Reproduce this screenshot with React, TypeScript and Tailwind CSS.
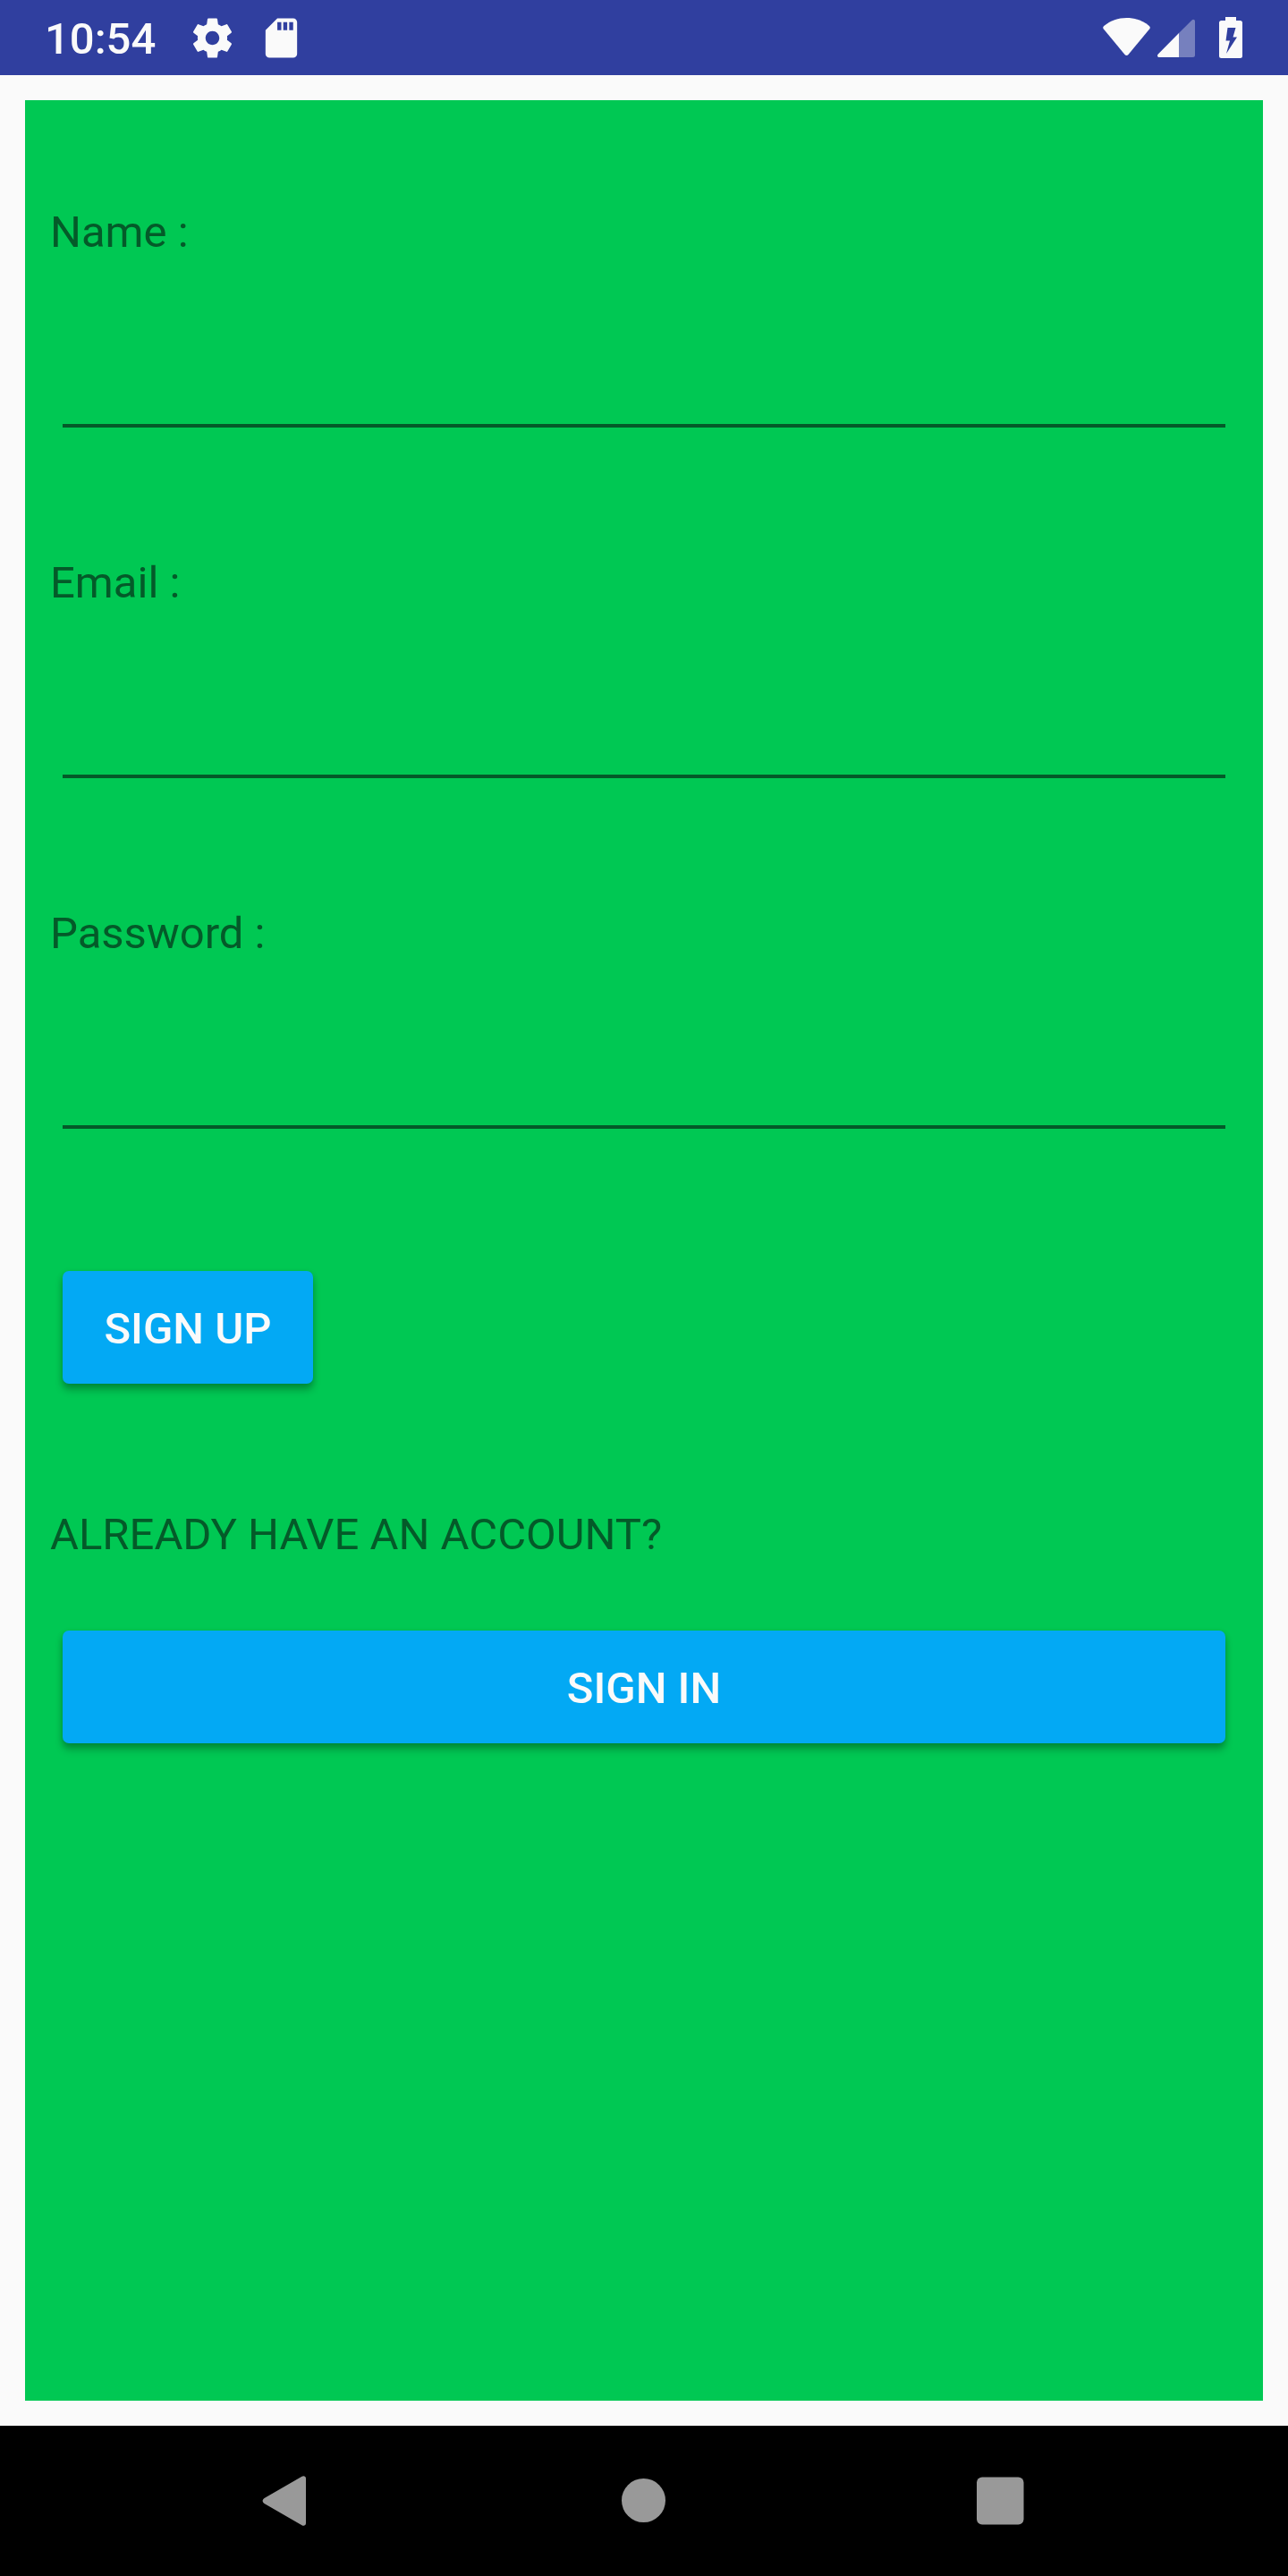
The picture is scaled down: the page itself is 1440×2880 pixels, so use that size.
import type { ReactNode } from "react";

function StatusBar() {
  return (
    <header className="flex h-[84px] items-center bg-[#303f9f] px-[50px] text-[#fafafa]">
      <time className="pt-[3px] text-[49px] leading-[58px] font-medium">10:54</time>
      <svg className="ml-[37px] size-[53px]" viewBox="0 0 24 24" fill="currentColor" aria-hidden="true">
        <path d="M19.43 12.98c.04-.32.07-.64.07-.98s-.03-.66-.07-.98l2.11-1.65c.19-.15.24-.42.12-.64l-2-3.46c-.12-.22-.39-.3-.61-.22l-2.49 1c-.52-.4-1.08-.73-1.69-.98l-.38-2.65C14.46 2.18 14.25 2 14 2h-4c-.25 0-.46.18-.49.42l-.38 2.65c-.61.25-1.17.59-1.69.98l-2.49-1c-.23-.09-.49 0-.61.22l-2 3.46c-.13.22-.07.49.12.64l2.11 1.65c-.04.32-.07.65-.07.98s.03.66.07.98l-2.11 1.65c-.19.15-.24.42-.12.64l2 3.46c.12.22.39.3.61.22l2.49-1c.52.4 1.08.73 1.69.98l.38 2.65c.03.24.24.42.49.42h4c.25 0 .46-.18.49-.42l.38-2.65c.61-.25 1.17-.59 1.69-.98l2.49 1c.23.09.49 0 .61-.22l2-3.46c.12-.22.07-.49-.12-.64l-2.11-1.65zM12 15.5c-1.93 0-3.500-1.570-3.500-3.500s1.570-3.500 3.500-3.500 3.500 1.570 3.500 3.500-1.570 3.500-3.500 3.500z" />
      </svg>
      <svg className="ml-[24px] size-[53px]" viewBox="0 0 24 24" fill="currentColor" aria-hidden="true">
        <path d="M18 2h-8L4.02 8 4 20c0 1.1.9 2 2 2h12c1.1 0 2-.9 2-2V4c0-1.1-.9-2-2-2zm-6 6h-2V4h2v4zm3 0h-2V4h2v4zm3 0h-2V4h2v4z" />
      </svg>
      <div className="ml-auto flex items-center">
        <svg className="h-[46px] w-[54px]" viewBox="0 0 54 46" fill="currentColor" aria-hidden="true">
          <path d="M1.200 10C8.500 4 17.300 1 26.500 1S44.500 4 51.800 10C53 11 53.100 12.200 52.300 13.200L28.500 42C27.300 43.300 25.700 43.300 24.500 42L.7 13.200C-.1 12.200 0 11 1.200 10Z" />
        </svg>
        <svg className="ml-[7px] h-[46px] w-[42px]" viewBox="0 0 42 46" fill="currentColor" aria-hidden="true">
          <path opacity=".35" d="M24 18L38.600 3.400C40 2.100 42 3 42 5V42.500C42 44.200 41.200 45 39.500 45H24Z" />
          <path d="M24 18V45H2C0 45-.6 42.800.8 41.400Z" />
        </svg>
        <svg className="ml-[27px] h-[46px] w-[27px]" viewBox="0 0 27 46" aria-hidden="true">
          <path fill="currentColor" d="M7 0H19V4H23.500Q26 4 26 6.500V43.500Q26 46 23.500 46H2.500Q0 46 0 43.500V6.500Q0 4 2.500 4H7Z" />
          <path fill="#303f9f" d="M9.500 12H18.500L15.500 22.500H20L8 41L12 26.500H7.500Z" />
        </svg>
      </div>
    </header>
  );
}

function Field({ id, label, type }: { id: string; label: string; type: string }) {
  return (
    <div className="pb-[145px]">
      <label htmlFor={id} className="block text-[49px] leading-[58px]">
        {label}
      </label>
      <div className="px-[14px] pt-[68px]">
        <input
          id={id}
          type={type}
          className="block h-[121px] w-full border-b-4 border-[#045a29] bg-transparent text-[63px] outline-none"
        />
      </div>
    </div>
  );
}

function RaisedButton({ children, full = false }: { children: ReactNode; full?: boolean }) {
  return (
    <button
      type="button"
      className={
        (full ? "w-full" : "w-[280px]") +
        " block h-[126px] rounded-[7px] bg-[#03a9f4] pt-[3px] text-[49px] leading-[58px] font-medium text-[#fafafa] shadow-[0_7px_8px_rgba(0,0,0,0.25),0_2px_7px_rgba(0,0,0,0.12)]"
      }
    >
      {children}
    </button>
  );
}

function NavBar() {
  return (
    <nav className="flex h-[168px] items-center justify-center gap-[342px] bg-black text-[#999999]">
      <button type="button" aria-label="Back">
        <svg className="size-[56px] overflow-visible" viewBox="0 0 56 56" fill="currentColor" aria-hidden="true">
          <path d="M48 3V53C48 55.500 45.500 56.500 43.500 55.200L1.500 31C-1 29.400-1 26.600 1.500 25L43.500.8C45.500-.5 48 .5 48 3Z" />
        </svg>
      </button>
      <button type="button" aria-label="Home">
        <svg className="size-[56px]" viewBox="0 0 56 56" fill="currentColor" aria-hidden="true">
          <circle cx="27.500" cy="27.500" r="24.500" />
        </svg>
      </button>
      <button type="button" aria-label="Overview">
        <svg className="size-[56px]" viewBox="0 0 56 56" fill="currentColor" aria-hidden="true">
          <rect x="2" y="1.500" width="52.500" height="53" rx="6" />
        </svg>
      </button>
    </nav>
  );
}

export default function App() {
  return (
    <div className="flex min-h-screen flex-col bg-[#fafafa] font-['Roboto',sans-serif]">
      <StatusBar />
      <main className="flex grow flex-col p-[28px]">
        <form className="grow bg-[#00c853] px-[28px] pt-[119px] text-[#045a29]">
          <Field id="name" label="Name :" type="text" />
          <Field id="email" label="Email :" type="email" />
          <Field id="password" label="Password :" type="password" />
          <div className="px-[14px] pt-[14px]">
            <RaisedButton>SIGN UP</RaisedButton>
          </div>
          <p className="pt-[140px] text-[49px] leading-[58px]">ALREADY HAVE AN ACCOUNT?</p>
          <div className="px-[14px] pt-[78px]">
            <RaisedButton full>SIGN IN</RaisedButton>
          </div>
        </form>
      </main>
      <NavBar />
    </div>
  );
}
